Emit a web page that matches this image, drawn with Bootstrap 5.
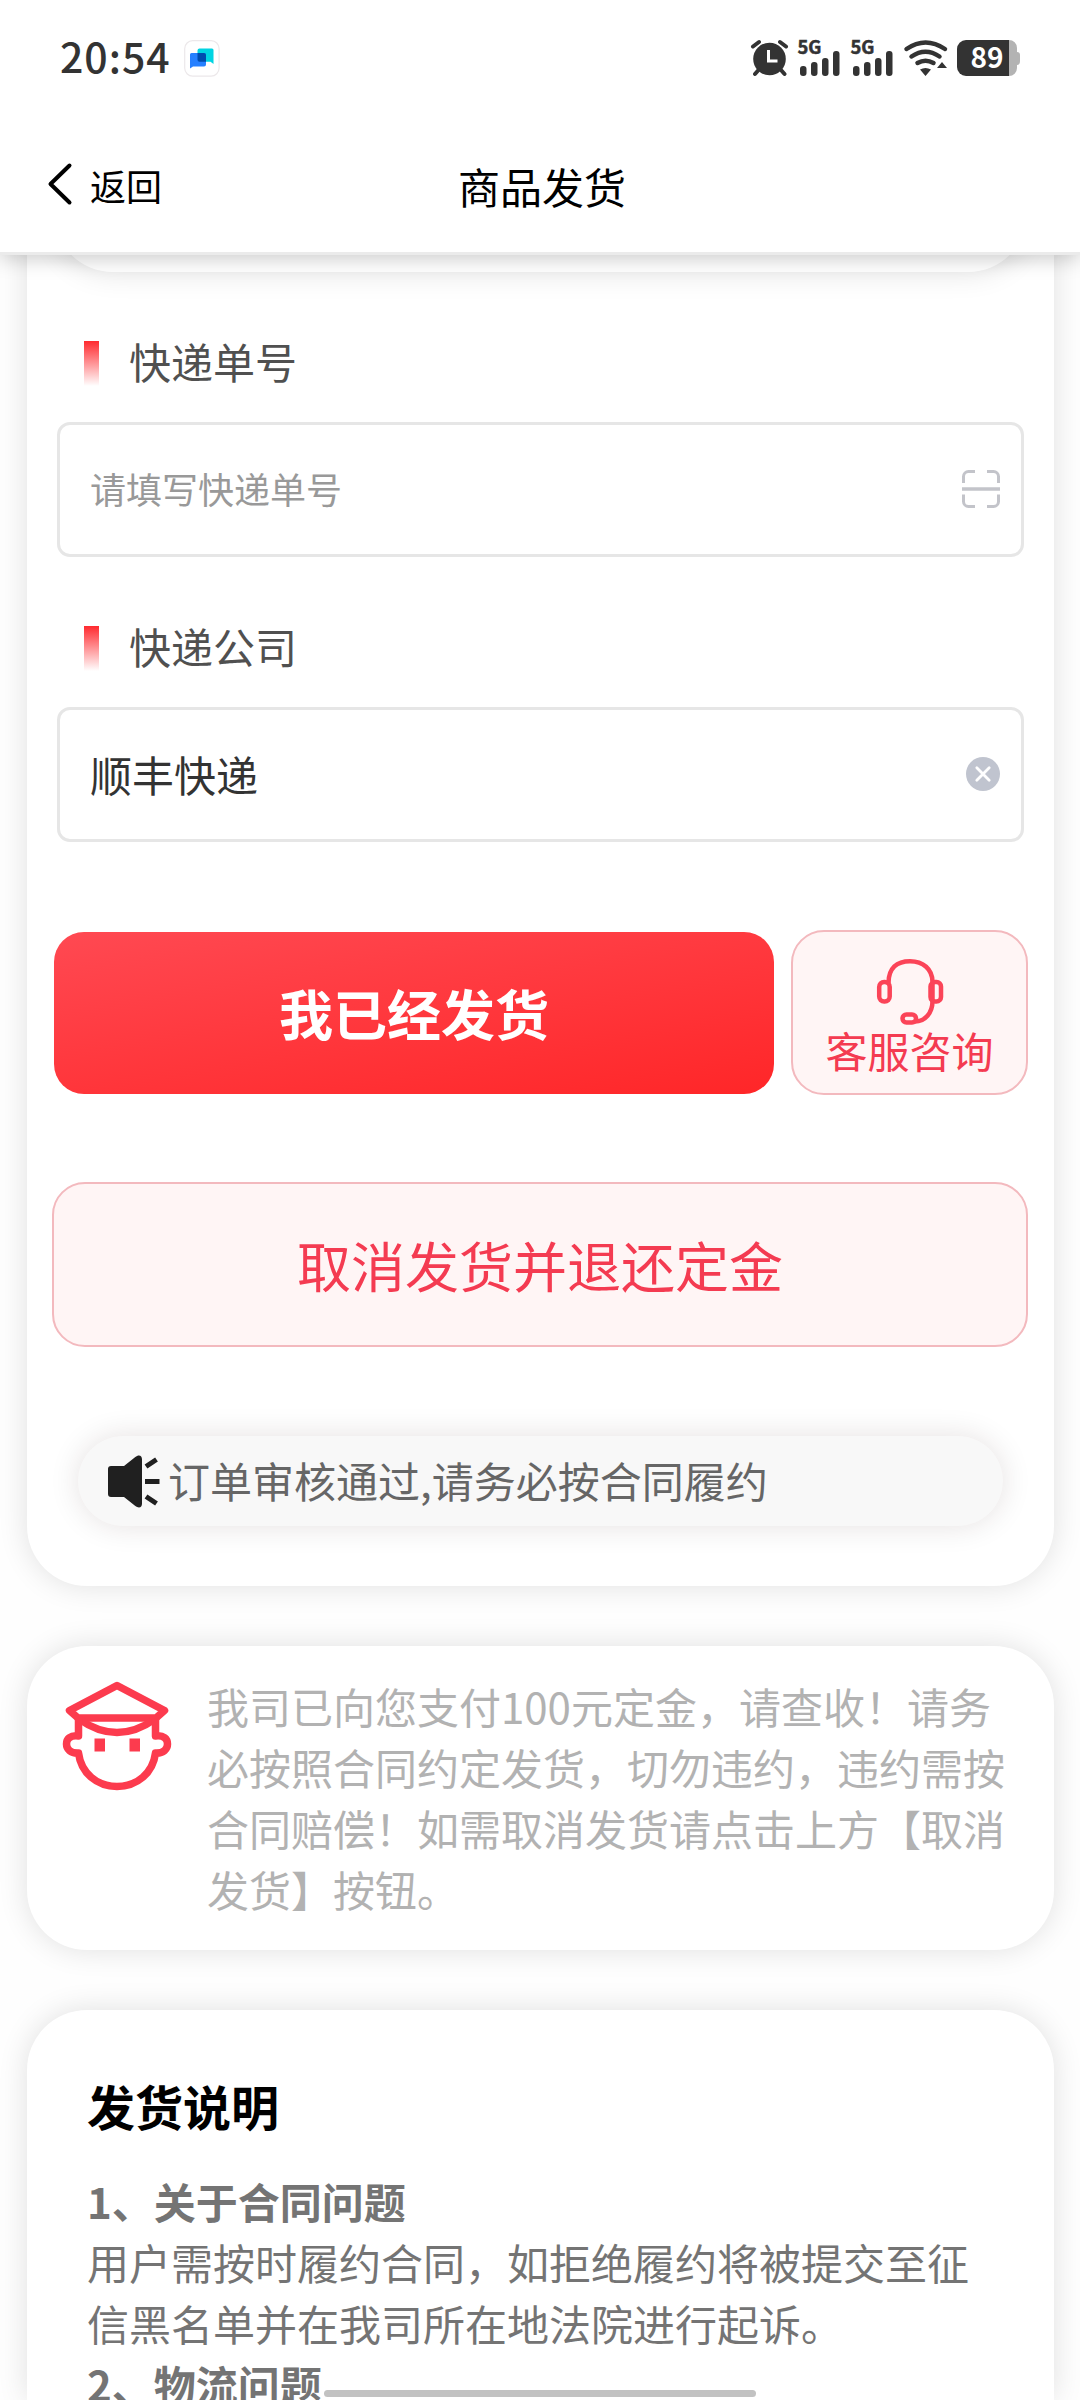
<!DOCTYPE html>
<html lang="zh-CN">
<head>
<meta charset="utf-8">
<meta name="viewport" content="width=device-width, initial-scale=1">
<title>商品发货</title>
<link href="https://cdn.jsdelivr.net/npm/bootstrap@5.3.0/dist/css/bootstrap.min.css" rel="stylesheet">
<style>
  body { width: 1080px; height: 2400px; overflow: hidden; background: #fefefe; font-family: "Noto Sans CJK SC", sans-serif; font-size: 42px; line-height: 61px; color: #000; }
  svg { display: block; flex: none; overflow: visible; }
  .top-area { z-index: 5; height: 255px; background: #fff; border-bottom: 3px solid #ebebeb; box-shadow: 0 3px 20px rgba(0,0,0,.22); }
  .status-row { height: 116px; padding: 0 60px 0 60px; color: #333; }
  .clock-text { font-size: 41px; font-weight: 500; letter-spacing: 1px; line-height: 60px; margin-top: -7px; }
  .nav-row { height: 136px; padding: 2px 48px 0; }
  .nav-side { width: 200px; font-size: 36px; }
  .nav-side svg { margin-top: -2px; margin-right: 18px; }
  .page-body { height: 2245px; overflow: hidden; margin-top: -100px; padding: 0 26px 0 27px; gap: 60px; }
  .panel { flex: none; background: #fff; border-radius: 60px; box-shadow: 0 0 30px rgba(0,0,0,.12); }
  .form-panel { padding: 0 27px 60px; border-top-left-radius: 0; border-top-right-radius: 0; }
  .prev-panel { height: 117px; background: #fff; border-radius: 60px; box-shadow: 0 0 30px rgba(0,0,0,.12); }
  .label-row { margin-top: 69px; height: 45px; padding-left: 30px; gap: 30px; line-height: 40px; color: #505050; }
  .label-bar { width: 15px; height: 45px; background: linear-gradient(#ff2a2f, #fff); }
  .field-box { margin: 36px 3px 0; height: 135px; border: 3px solid #e6e6e6; border-radius: 13px; padding: 0 21px 2px 30px; color: #333; background: #fff; }
  .field-hint { font-size: 36px; color: #999; }
  .action-row { margin-top: 88px; gap: 17px; }
  .send-btn { width: 720px; height: 162px; border: 0; border-radius: 30px; padding: 0; font-size: 54px; font-weight: 700; color: #fff; background: linear-gradient(170deg, #ff4952, #ff2628); }
  .soft-btn { border: 2px solid #f3b9be; border-radius: 33px; background: #fff5f5; color: #f43b51; height: 165px; padding: 0; }
  .help-btn { width: 237px; margin-right: -2px; font-size: 42px; line-height: 50px; }
  .cancel-btn { margin: 87px -1px 0 -2px; font-size: 54px; }
  .notice-bar { margin: 89px 24px 0; height: 90px; border-radius: 45px; background: #f8f8f8; box-shadow: 0 0 30px rgba(40,10,14,.12); padding-left: 30px; gap: 9px; color: #666; }
  .notice-bar span { margin: -4px 0 0 -1px; }
  .tip-panel { padding: 29px 40px 30px 36px; height: 304px; color: #b2b2b2; gap: 36px; }
  .tip-panel svg { margin-top: 6px; }
  .tip-copy { width: 804px; }
  .guide-panel { padding: 60px 60px 0; height: 390px; color: #747474; line-height: 61px; border-bottom-left-radius: 0; border-bottom-right-radius: 0; }
  .guide-title { font-size: 48px; font-weight: 700; color: #000; line-height: 70px; margin: 0 0 30px; }
  .home-bar { left: 324px; top: 2390px; width: 432px; height: 7px; border-radius: 4px; background: #c2c2c2; z-index: 6; }
</style>
</head>
<body class="position-relative">
<header class="top-area position-relative">
  <div class="status-row d-flex align-items-center justify-content-between">
    <div class="d-flex align-items-center">
      <span class="clock-text">20:54</span>
      <svg width="36" height="37" viewBox="0 0 36 37" style="margin-left:13px">
        <rect x=".7" y=".7" width="34.4" height="35.4" rx="8" fill="#fff" stroke="#ece8ea" stroke-width="1.2"/>
        <path d="M13.5 10.5a2 2 0 0 1 2-2H28a1.5 1.5 0 0 1 1.500 1.500V24L26.500 21.800H15.500a2 2 0 0 1-2-2z" fill="#00d4e2"/>
        <path d="M6 14.500a1.500 1.500 0 0 1 1.500-1.500H20a2 2 0 0 1 2 2v9.500a2 2 0 0 1-2 2H9L6 28.500z" fill="#2680ff"/>
        <path d="M13.500 13H20a2 2 0 0 1 2 2v6.800H15.500a2 2 0 0 1-2-2z" fill="#004cae"/>
      </svg>
    </div>
    <svg width="270" height="37" viewBox="750 40 270 37" fill="#333">
      <circle cx="769.500" cy="59" r="16.300"/>
      <path d="M753 46.500l6-4.500M786 46.500l-6-4.500M758.500 70l-3.500 4M781 70l3.500 4" stroke="#333" stroke-width="4" stroke-linecap="round"/>
      <path d="M768.500 50v11h9" fill="none" stroke="#fff" stroke-width="3"/>
      <text x="797.500" y="54" font-family="Noto Sans CJK SC, sans-serif" font-weight="700" stroke="#333" stroke-width=".5" font-size="18" textLength="24" lengthAdjust="spacingAndGlyphs">5G</text>
      <text x="850.500" y="54" font-family="Noto Sans CJK SC, sans-serif" font-weight="700" stroke="#333" stroke-width=".5" font-size="18" textLength="24" lengthAdjust="spacingAndGlyphs">5G</text>
      <g id="bars"><rect x="800" y="66" width="6.500" height="10" rx="3"/><rect x="811" y="62" width="6.500" height="14" rx="3"/><rect x="822" y="58" width="6.500" height="18" rx="3"/><rect x="833" y="51" width="6.500" height="25" rx="3"/></g>
      <use href="#bars" x="53"/>
      <g fill="none" stroke="#333" stroke-width="4.500" stroke-linecap="round">
        <path d="M906.500 49Q925.500 36 945 49"/><path d="M911.500 56.500Q925.500 47 939.500 56.500"/><path d="M917.500 63Q925.500 58.500 933.500 63"/>
      </g>
      <path d="M920 69.500q5.500-3 11 0L925.500 76zM937 68h10l-5-6z"/>
      <path d="M1009 40a8 8 0 0 1 8 8v4q3 0 3 3v6q0 4-3 4v3a8 8 0 0 1-8 8z" fill="#b3b3b3"/>
      <path d="M966 40h43v36h-43a9 9 0 0 1-9-9V49a9 9 0 0 1 9-9z"/>
      <text x="987" y="68" text-anchor="middle" font-family="Noto Sans CJK SC, sans-serif" font-weight="700" font-size="28" textLength="33" fill="#fff">89</text>
    </svg>
  </div>
  <nav class="nav-row d-flex align-items-center justify-content-between">
    <div class="nav-side d-flex align-items-center">
      <svg width="24" height="42" viewBox="0 0 24 42" fill="none" stroke="#000" stroke-width="4" stroke-linecap="round" stroke-linejoin="round"><path d="M21.500 2.500L2.500 21l19 18.500"/></svg>
      <span>返回</span>
    </div>
    <span class="ps-1">商品发货</span>
    <div class="nav-side"></div>
  </nav>
</header>

<main class="page-body d-flex flex-column">
  <section class="panel form-panel">
    <div class="prev-panel"></div>
    <div class="label-row d-flex align-items-start"><span class="label-bar"></span><span>快递单号</span></div>
    <div class="field-box d-flex align-items-center justify-content-between">
      <span class="field-hint">请填写快递单号</span>
      <svg width="38" height="38" viewBox="0 0 38 38" fill="none" stroke="#c3c4ca" stroke-width="3"><path d="M1.500 13V6.500a5 5 0 0 1 5-5H13M25 1.500h6.500a5 5 0 0 1 5 5V13M36.500 24.500v7a5 5 0 0 1-5 5H25M13 36.500H6.500a5 5 0 0 1-5-5v-7"/><path d="M0 19h38" stroke-width="3.600"/></svg>
    </div>
    <div class="label-row d-flex align-items-start"><span class="label-bar"></span><span>快递公司</span></div>
    <div class="field-box d-flex align-items-center justify-content-between">
      <span>顺丰快递</span>
      <svg width="34" height="34" viewBox="0 0 34 34"><circle cx="17" cy="17" r="17" fill="#c0c4cf"/><path d="M10.800 10.800l12.400 12.400M23.200 10.800L10.800 23.200" stroke="#fff" stroke-width="2.800" stroke-linecap="round"/></svg>
    </div>
    <div class="action-row d-flex align-items-center">
      <button class="btn send-btn flex-shrink-0">我已经发货</button>
      <button class="btn soft-btn help-btn flex-shrink-0 d-flex flex-column align-items-center">
        <svg width="66" height="66" viewBox="0 0 66 66" fill="none" stroke="#fb4458" stroke-width="4.500" style="margin-top:27px">
          <path d="M11.500 24C11.500 9 20 2.200 33 2.200S55.500 10 55.500 23V42C55.500 54 48 62.500 38 62.500"/>
          <rect x="2.200" y="23" width="10.500" height="19.500" rx="5"/><rect x="53.500" y="23" width="10.500" height="19.500" rx="4.500"/>
          <rect x="25.500" y="55.500" width="13.500" height="8" rx="4"/>
        </svg>
        <span>客服咨询</span>
      </button>
    </div>
    <div class="d-grid"><button class="btn soft-btn cancel-btn">取消发货并退还定金</button></div>
    <div class="notice-bar d-flex align-items-center">
      <svg width="52" height="53" viewBox="0 0 52 53" fill="#202020"><path d="M3 11h13L27 2.200c4-3.200 7-1.500 7 2v44.600c0 3.500-3 5.200-7 2L16 42H3q-3 0-3-3V14q0-3 3-3z"/><path d="M38 11.500l10.500-7M37 26.500h14.500M38 41.500l10.500 7" stroke="#202020" stroke-width="5" fill="none"/></svg>
      <span>订单审核通过,请务必按合同履约</span>
    </div>
  </section>

  <section class="panel tip-panel d-flex align-items-start">
    <svg width="108" height="110" viewBox="0 0 108 110" fill="none" stroke="#fc3b4e" stroke-width="7.500" stroke-linejoin="round">
      <path d="M54 4.500L6.500 29.500 15 37H93l8.500-7.500z"/>
      <path d="M16 38Q54 65 92 38"/>
      <path d="M15.500 38v17C7 54 3.500 58 3.500 63s4 9.500 12 9C18 92 34 105.500 54 105.500S90 92 92.500 72c8 .5 12-4 12-9s-3.500-9-12-8V38"/>
      <path d="M31.500 57.500h10.500v13H31.500zM66.500 57.500H77v13H66.500z" fill="#fc3b4e" stroke="none"/>
    </svg>
    <div class="tip-copy flex-shrink-0">我司已向您支付100元定金，请查收！请务必按照合同约定发货，切勿违约，违约需按合同赔偿！如需取消发货请点击上方【取消发货】按钮。</div>
  </section>

  <section class="panel guide-panel">
    <h2 class="guide-title">发货说明</h2>
    <div class="fw-bold">1、关于合同问题</div>
    <div>用户需按时履约合同，如拒绝履约将被提交至征信黑名单并在我司所在地法院进行起诉。</div>
    <div class="fw-bold">2、物流问题</div>
  </section>
</main>
<div class="home-bar position-absolute"></div>
<script src="https://cdn.jsdelivr.net/npm/bootstrap@5.3.0/dist/js/bootstrap.bundle.min.js"></script>
</body>
</html>
